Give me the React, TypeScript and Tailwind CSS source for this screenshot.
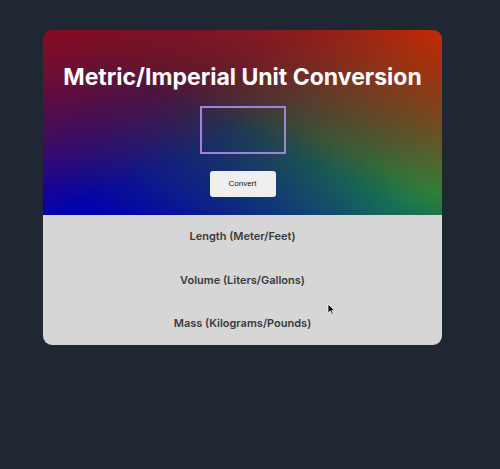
const units = ['Length (Meter/Feet)', 'Volume (Liters/Gallons)', 'Mass (Kilograms/Pounds)'];

const App = () => {
	return (
		<div className="relative h-[469px] w-[500px] bg-[#1f2733] pt-[30px] font-['Inter',sans-serif]">
			<div className="ml-[43px] w-[399px] overflow-hidden rounded-[9px]">
				<div className="flex flex-col items-center bg-[#2a2140] bg-[linear-gradient(to_bottom_right,#8a0a22_0%,rgba(138,10,34,0)_52%),linear-gradient(to_bottom_left,#c42a02_0%,rgba(196,42,2,0)_52%),linear-gradient(to_top_right,#0202ac_0%,#0202ac_8%,rgba(2,2,172,0)_56%),linear-gradient(to_top_left,#1a8c40_0%,#1a8c40_8%,rgba(26,140,64,0)_68%)] pt-[31px] pb-[18px]">
					<h1 className="text-[23px] leading-8 font-bold text-white">
						Metric/Imperial Unit Conversion
					</h1>
					<input
						type="text"
						className="mt-[13px] h-[48px] w-[86px] border-2 border-[#9d84d4] bg-transparent outline-none"
					/>
					<button className="mt-[17px] h-[26px] w-[66px] rounded-[3px] bg-[#efefef] font-['Liberation_Sans',sans-serif] text-[8px] text-[#111]">
						Convert
					</button>
				</div>
				<div className="flex flex-col bg-[#d6d6d6]">
					{units.map((u) => (
						<div
							key={u}
							className="flex h-[43.3px] items-center justify-center text-[11px] font-semibold text-[#3a3a3a]">
							{u}
						</div>
					))}
				</div>
			</div>
			<svg className="absolute top-[303px] left-[327px]" width="9" height="13" viewBox="0 0 9 13">
				<path d="M1 1 L1 10 L3.3 8 L5 11.8 L6.4 11.2 L4.8 7.6 L7.8 7.6 Z" fill="#000" stroke="#fff" strokeWidth="0.8" />
			</svg>
		</div>
	);
};

export default App;
